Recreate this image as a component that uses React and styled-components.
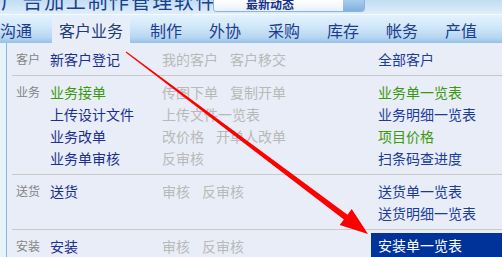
import React from "react"
import styled, { createGlobalStyle } from "styled-components"

const GlobalStyle = createGlobalStyle`
  html, body {
    margin: 0;
    padding: 0;
    background: #e8edf7;
    overflow: hidden;
  }
  body {
    font-family: "Noto Sans CJK SC", "Liberation Sans", sans-serif;
  }
`

const navItems = ["沟通", "客户业务", "制作", "外协", "采购", "库存", "帐务", "产值"]

const groups = [
  {
    label: "客户",
    rows: [
      { main: "新客户登记", extra: ["我的客户", "客户移交"], side: "全部客户" },
    ],
  },
  {
    label: "业务",
    rows: [
      { main: "业务接单", mainTone: "green", extra: ["传图下单", "复制开单"], side: "业务单一览表", sideTone: "green" },
      { main: "上传设计文件", extra: ["上传文件一览表"], side: "业务明细一览表" },
      { main: "业务改单", extra: ["改价格", "开单人改单"], side: "项目价格", sideTone: "green" },
      { main: "业务单审核", extra: ["反审核"], side: "扫条码查进度" },
    ],
  },
  {
    label: "送货",
    rows: [
      { main: "送货", extra: ["审核", "反审核"], side: "送货单一览表" },
      { main: "", extra: [], side: "送货明细一览表" },
    ],
  },
  {
    label: "安装",
    rows: [
      { main: "安装", extra: ["审核", "反审核"], side: "安装单一览表", active: true },
    ],
  },
]

export default function App() {
  return (
    <Page>
      <GlobalStyle />
      <TitleBar>
        <Title>广告加工制作管理软件</Title>
        <Search>
          <SearchText>最新动态</SearchText>
          <SearchButton />
        </Search>
      </TitleBar>
      <Nav>
        {navItems.map((item) => (
          <NavItem key={item} $active={item === "客户业务"}>
            {item}
          </NavItem>
        ))}
      </Nav>
      <Body>
        <Strip />
        <Panel>
          {groups.map((group) => (
            <Group key={group.label}>
              {group.rows.map((row, i) => (
                <React.Fragment key={i}>
                  <Label>{i === 0 ? group.label : ""}</Label>
                  <MainLink $tone={row.mainTone}>{row.main}</MainLink>
                  <Extras>
                    {row.extra.map((e) => (
                      <Muted key={e}>{e}</Muted>
                    ))}
                  </Extras>
                  <SideLink $tone={row.sideTone} $active={row.active}>
                    {row.side}
                  </SideLink>
                </React.Fragment>
              ))}
            </Group>
          ))}
        </Panel>
      </Body>
      <Arrow viewBox="0 0 502 257" width="502" height="257">
        <polygon
          fill="#ff0000"
          points="125.7,52.4 126.3,51.6 347.5,214.7 351.7,209.1 368,234 339.7,225.1 343.9,219.5"
        />
      </Arrow>
    </Page>
  )
}

const Page = styled.div`
  position: relative;
  width: 502px;
  height: 257px;
  overflow: hidden;
  background: #e8edf7;
`

const TitleBar = styled.div`
  height: 14px;
  display: flex;
  align-items: flex-end;
  overflow: hidden;
  background: linear-gradient(#c2ddf3, #dfeefb);
`

const Title = styled.div`
  width: 212px;
  flex-shrink: 0;
  margin-left: 1px;
  margin-bottom: 3px;
  font-size: 20px;
  line-height: 20px;
  letter-spacing: 1.6px;
  color: #1b3f8f;
  white-space: nowrap;
`

const Search = styled.div`
  display: flex;
  align-self: stretch;
  width: 150px;
  border: 1px solid #8fb4d8;
  border-top: none;
  border-radius: 0 0 4px 4px;
  overflow: hidden;
  margin-bottom: 2px;
`

const SearchText = styled.div`
  flex: 1;
  background: linear-gradient(#ffffff, #e6f1fb);
  font-size: 12px;
  line-height: 12px;
  padding-left: 32px;
  color: #16308a;
  font-weight: bold;
  display: flex;
  align-items: flex-end;
  padding-bottom: 1px;
`

const SearchButton = styled.div`
  width: 21px;
  background: linear-gradient(#a9cdef, #7fb0e0);
`

const Nav = styled.div`
  height: 29px;
  display: flex;
  align-items: flex-end;
  padding-left: 0;
  border-top: 1px solid #f4fbff;
  box-sizing: border-box;
  background: linear-gradient(#e3f2fd 0%, #d2e8f9 40%, #b6d6f1 80%, #95c1e8 100%);
  overflow: hidden;
  & > :first-child {
    margin-left: -13.5px;
  }
`

const NavItem = styled.div`
  flex-shrink: 0;
  height: 26px;
  line-height: 26px;
  font-size: 16px;
  color: #1c3c8e;
  white-space: nowrap;
  padding: 0 ${(p) => (p.$active ? "7px" : "13.5px")};
  margin: 0 ${(p) => (p.$active ? "6.5px" : "0")};
  background: ${(p) => (p.$active ? "#e8eef8" : "transparent")};
  color: ${(p) => (p.$active ? "#243a78" : "#1c3c8e")};
`

const Body = styled.div`
  display: flex;
  height: 214px;
`

const Strip = styled.div`
  width: 6px;
  flex-shrink: 0;
  background: #e6f3fc;
  border-right: 1px solid #86b4e3;
`

const Panel = styled.div`
  flex: 1;
  padding-left: 5px;
  display: flex;
  flex-direction: column;
`

const Group = styled.div`
  display: grid;
  grid-template-columns: 38px 112px 209px 1fr;
  grid-auto-rows: 22px;
  padding: 5px 0;
  border-bottom: 1px solid #c9c9c9;
  &:last-child {
    border-bottom: none;
    padding-bottom: 0;
  }
`

const Label = styled.div`
  padding-left: 4px;
  font-size: 12px;
  line-height: 22px;
  color: #858585;
`

const MainLink = styled.div`
  font-size: 14px;
  line-height: 22px;
  white-space: nowrap;
  color: ${(p) => (p.$tone === "green" ? "#3a9a0c" : "#1b2f8e")};
`

const Extras = styled.div`
  display: flex;
  gap: 12px;
`

const Muted = styled.span`
  font-size: 14px;
  line-height: 22px;
  color: #b9b9b9;
  white-space: nowrap;
`

const SideLink = styled.div`
  font-size: 14px;
  line-height: 22px;
  padding-left: 7px;
  white-space: nowrap;
  color: ${(p) => (p.$active ? "#ffffff" : p.$tone === "green" ? "#3a9a0c" : "#1b3c9a")};
  background: ${(p) => (p.$active ? "#003399" : "transparent")};
  margin-top: ${(p) => (p.$active ? "-2px" : "0")};
  height: ${(p) => (p.$active ? "24px" : "auto")};
  line-height: ${(p) => (p.$active ? "24px" : "22px")};
`

const Arrow = styled.svg`
  position: absolute;
  left: 0;
  top: 0;
  pointer-events: none;
`
